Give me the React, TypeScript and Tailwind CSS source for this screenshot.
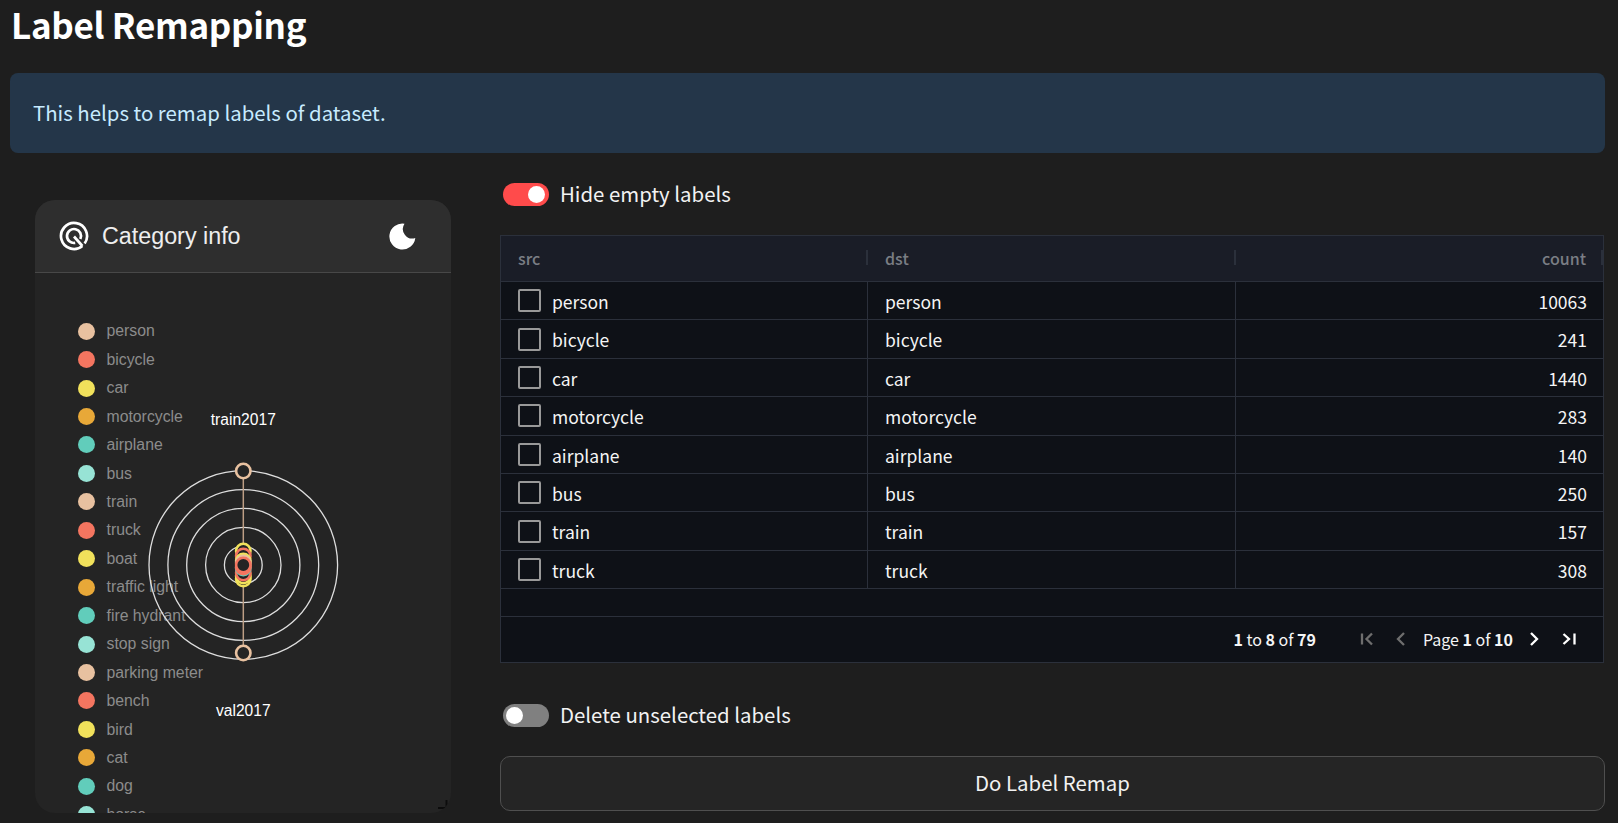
const FONT = "font-['Noto_Sans_CJK_SC','Noto_Sans',sans-serif]";
const legend: [string, string][] = [
  ["person", "#e8c1a0"], ["bicycle", "#f47560"], ["car", "#f1e15b"], ["motorcycle", "#e8a838"],
  ["airplane", "#61cdbb"], ["bus", "#97e3d5"], ["train", "#e8c1a0"], ["truck", "#f47560"],
  ["boat", "#f1e15b"], ["traffic light", "#e8a838"], ["fire hydrant", "#61cdbb"], ["stop sign", "#97e3d5"],
  ["parking meter", "#e8c1a0"], ["bench", "#f47560"], ["bird", "#f1e15b"], ["cat", "#e8a838"],
  ["dog", "#61cdbb"], ["horse", "#97e3d5"],
];
const rows: [string, string][] = [
  ["person", "10063"], ["bicycle", "241"], ["car", "1440"], ["motorcycle", "283"],
  ["airplane", "140"], ["bus", "250"], ["train", "157"], ["truck", "308"],
];
function Toggle({ on }: { on: boolean }) {
  return (
    <div className={`relative h-[23px] w-[46px] rounded-full ${on ? "bg-[#ff4b4b]" : "bg-[#808080]"}`}>
      <div className={`absolute top-[3px] h-[17px] w-[17px] rounded-full bg-white ${on ? "left-[25px]" : "left-[3px]"}`} />
    </div>
  );
}
function Chart() {
  const nodes: [number, string][] = [
    [-14, "#f1e15b"], [14, "#f1e15b"], [11, "#f1e15b"], [-9, "#f47560"], [8, "#f47560"], [3, "#61cdbb"], [-4, "#f1e15b"], [2, "#f47560"], [-2, "#e8c1a0"], [0, "#f47560"],
  ];
  return (
    <svg className="absolute left-0 top-0" width="416" height="540" viewBox="35 273 416 540" fill="none">
      {[94.3, 75.4, 56.6, 37.7, 18.9].map((r) => (
        <circle key={r} cx="243.3" cy="565" r={r} stroke="#dedede" strokeWidth="1.3" />
      ))}
      <line x1="243.3" y1="471" x2="243.3" y2="653" stroke="#bd9e85" strokeWidth="1.5" />
      <circle cx="243.3" cy="471" r="7.2" fill="#242424" stroke="#e8c1a0" strokeWidth="2.6" />
      <circle cx="243.3" cy="653" r="7.2" fill="#242424" stroke="#e8c1a0" strokeWidth="2.6" />
      {nodes.map(([d, c], i) => (
        <circle key={i} cx="243.3" cy={565 + d} r="7.2" fill="#242424" stroke={c} strokeWidth="2.6" />
      ))}
      <text x="243.3" y="425" textAnchor="middle" fill="#fff" fontSize="15.6" fontFamily="Liberation Sans">train2017</text>
      <text x="243.3" y="716" textAnchor="middle" fill="#fff" fontSize="15.6" fontFamily="Liberation Sans">val2017</text>
    </svg>
  );
}
function Chevron({ d, dim }: { d: string; dim?: boolean }) {
  return (
    <svg width="16" height="16" viewBox="0 0 16 16" fill="none" stroke={dim ? "#6e6e6e" : "#fff"} strokeWidth="2.3">
      <path d={d} />
    </svg>
  );
}
export default function App() {
  return (
    <div className={`h-[823px] w-[1618px] overflow-hidden bg-[#1e1e1e] pl-[10px] pr-[13px] text-white ${FONT}`}>
      <h1 className="pl-px pt-[1px] text-[35px] font-semibold leading-[46px] tracking-[-0.32px]">Label Remapping</h1>
      <div className="mt-[26px] flex h-[80px] items-center rounded-lg bg-[#243649] pb-[2px] pl-[23px] text-[20.4px] text-[#c7ebff]">
        This helps to remap labels of dataset.
      </div>
      <div className="flex">
        <div className="w-[490px] shrink-0 pl-[25px] pt-[47px]">
          <div className="relative h-[613px] w-[416px] overflow-hidden rounded-[20px] bg-[#242424] font-['Liberation_Sans',sans-serif]">
            <div className="flex h-[73px] items-center justify-between border-b border-[#484848] bg-[#2e2e2e] pl-[24px] pr-[35px]">
              <div className="flex items-center gap-[13px]">
                <svg width="30" height="30" viewBox="0 0 30 30" fill="none" stroke="#fff" strokeWidth="2.7">
                  <path d="M25.65 22.46 A13 13 0 1 0 23.36 24.96" />
                  <path d="M21.34 17.96 A7 7 0 1 0 16.2 21.9" />
                  <path d="M15 15.5 L23.4 25" />
                </svg>
                <span className="pt-[2px] text-[23.3px] leading-none text-[#eeeeee]">Category info</span>
              </div>
              <svg width="27" height="27" viewBox="0 0 27 27" fill="#fff">
                <path d="M15.5 0.7 A13 13 0 1 0 26.3 15 A9.5 9.5 0 0 1 15.5 0.7 Z" />
              </svg>
            </div>
            <div className="relative h-[540px]">
              <div className="flex flex-col pl-[43px] pt-[44px]">
                {legend.map(([n, c]) => (
                  <div key={n} className="flex h-[28.45px] shrink-0 items-center gap-[11.5px]">
                    <div className="h-[17px] w-[17px] rounded-full" style={{ backgroundColor: c }} />
                    <span className="text-[15.8px] text-[#8c8c8c]">{n}</span>
                  </div>
                ))}
              </div>
              <Chart />
            </div>
            <svg className="absolute bottom-[4px] right-[3px]" width="10" height="10" viewBox="0 0 10 10" fill="none" stroke="#0c0c0c" strokeWidth="2">
              <path d="M0 9 H8.5 V1" />
            </svg>
          </div>
        </div>
        <div className="min-w-0 flex-1">
          <div className="flex items-center gap-[11px] pl-[3px] pt-[30px]">
            <Toggle on />
            <span className="-mt-[2px] text-[20.4px] leading-[23px] text-[#f2f2f2]">Hide empty labels</span>
          </div>
          <div className="mt-[29px] h-[428px] w-[1104px] border border-[#2b303b] bg-[#0e1117] text-[17.5px] text-[#f5f5f5]">
            <div className="flex h-[46px] items-center border-b border-[#2b303b] bg-[#1a1d27] text-[16px] font-medium text-[#7a7d84]">
              <div className="flex h-full w-[367px] items-center justify-between pb-[2px] pl-[17px]">
                <span>src</span><div className="h-[15px] w-[2px] bg-[#2b303b]" />
              </div>
              <div className="flex h-full w-[368px] items-center justify-between pb-[2px] pl-[17px]">
                <span>dst</span><div className="h-[15px] w-[2px] bg-[#2b303b]" />
              </div>
              <div className="flex h-full flex-1 items-center justify-end gap-[15px] pb-[2px]">
                <span>count</span><div className="h-[15px] w-[2px] bg-[#2b303b]" />
              </div>
            </div>
            {rows.map(([n, v]) => (
              <div key={n} className="flex h-[38.4px] items-center border-b border-[#2b303b]">
                <div className="flex h-full w-[367px] items-center gap-[11px] border-r border-[#2b303b] pl-[17px]">
                  <div className="h-[23px] w-[23px] rounded-[2px] border-2 border-[#999999]" />
                  <span className="pt-[3px]">{n}</span>
                </div>
                <div className="flex h-full w-[368px] items-center border-r border-[#2b303b] pl-[17px] pt-[3px]">{n}</div>
                <div className="flex-1 pr-[16px] pt-[3px] text-right">{v}</div>
              </div>
            ))}
            <div className="h-[27.8px] border-b border-[#2b303b]" />
            <div className="flex h-[45px] items-center justify-end pr-[26px] text-[16px]">
              <span><b className="font-bold">1</b> to <b className="font-bold">8</b> of <b className="font-bold">79</b></span>
              <div className="ml-[43px] flex items-center gap-[18px]">
                <Chevron dim d="M3 2.5V13.5M13 2.5L7.5 8L13 13.5" />
                <Chevron dim d="M11 2L5 8L11 14" />
              </div>
              <span className="ml-[14px] mr-[13px]">Page <b className="font-bold">1</b> of <b className="font-bold">10</b></span>
              <div className="flex items-center gap-[19px]">
                <Chevron d="M5 2L11 8L5 14" />
                <Chevron d="M2.5 3L8 8L2.5 13M13.5 2.5V13.5" />
              </div>
            </div>
          </div>
          <div className="mt-[41px] flex items-center gap-[11px] pl-[3px]">
            <Toggle on={false} />
            <span className="-mt-[2px] text-[20.4px] leading-[23px] text-[#f2f2f2]">Delete unselected labels</span>
          </div>
          <button className="mt-[29px] flex h-[55px] w-[1105px] items-center justify-center rounded-[10px] border border-[#4f4f4f] bg-[#252525] pb-[2px] text-[20.4px] text-[#f2f2f2]">
            Do Label Remap
          </button>
        </div>
      </div>
    </div>
  );
}
